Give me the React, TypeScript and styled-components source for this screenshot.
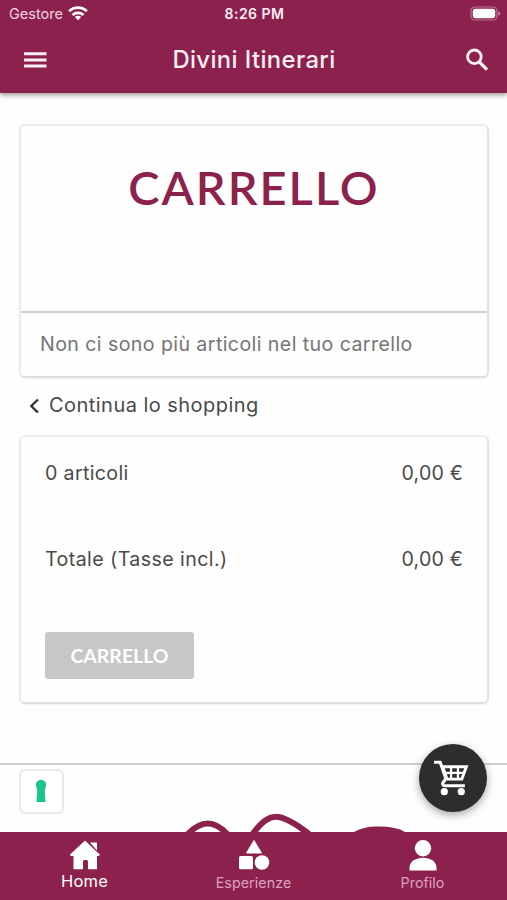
import React from 'react';
import styled, { createGlobalStyle } from 'styled-components';

const wine = '#8c214d';

const GlobalStyle = createGlobalStyle`
  * { box-sizing: border-box; }
  body { margin: 0; background: #fefefe; }
`;

const Screen = styled.div`
  position: relative;
  display: flex;
  flex-direction: column;
  width: 507px;
  height: 900px;
  overflow: hidden;
  background: #fefefe;
  font-family: Inter, sans-serif;
  color: #4a4a4a;
`;

const Header = styled.header`
  flex: none;
  height: 93px;
  background: ${wine};
  color: #fdeef5;
  box-shadow: 0 2px 5px rgba(0, 0, 0, 0.4);
`;

const StatusBar = styled.div`
  display: grid;
  grid-template-columns: 1fr auto 1fr;
  align-items: center;
  height: 27px;
  padding: 0 6px 0 9px;
`;

const Carrier = styled.div`
  display: flex;
  align-items: center;
  gap: 5px;
  font-size: 14.5px;
  letter-spacing: 0.1px;
  color: #f3d3e1;
`;

const Clock = styled.div`
  margin-right: 1px;
  font-size: 14px;
  font-weight: 600;
  letter-spacing: 0.5px;
`;

const BatterySlot = styled.div`
  display: flex;
  justify-content: flex-end;
`;

const Toolbar = styled.div`
  display: grid;
  grid-template-columns: 48px 1fr 48px;
  align-items: center;
  height: 65px;
  padding: 0 17px 0 22px;
`;

const IconButton = styled.button<{ $end?: boolean }>`
  display: flex;
  justify-content: ${(p) => (p.$end ? 'flex-end' : 'flex-start')};
  padding: 0;
  border: 0;
  background: none;
`;

const Title = styled.h1`
  margin: 0 4px 0 0;
  text-align: center;
  font: 500 23.8px/32px Inter, sans-serif;
  letter-spacing: 0.4px;
`;

const Main = styled.main`
  flex: 1;
  min-height: 0;
  display: flex;
  flex-direction: column;
  padding-top: 31px;
`;

const Card = styled.section<{ $height: number }>`
  flex: none;
  height: ${(p) => p.$height}px;
  margin: 0 18px 0 19px;
  border: 2px solid #ebebeb;
  border-right-color: #e2e2e2;
  border-bottom-color: #dedede;
  border-radius: 6px;
  background: #fefefe;
  box-shadow: 0 1px 2px rgba(0, 0, 0, 0.06);
`;

const CardHeading = styled.h2`
  height: 187px;
  margin: 0;
  padding: 28px 0 0 0;
  border-bottom: 2px solid #cfcfcf;
  text-align: center;
  font: 600 47px/66px Lato, sans-serif;
  letter-spacing: 2px;
  color: ${wine};
`;

const EmptyMessage = styled.p`
  margin: 0;
  padding-left: 19px;
  font-size: 19.6px;
  line-height: 62px;
  letter-spacing: 0.41px;
  white-space: nowrap;
  color: #757575;
`;

const BackLink = styled.a`
  flex: none;
  display: flex;
  align-items: center;
  gap: 9px;
  height: 57px;
  padding: 0 0 3px 29px;
  font-size: 20px;
`;

const SummaryRow = styled.div`
  display: flex;
  justify-content: space-between;
  height: 85.5px;
  padding: 0 24px;
  font-size: 19.6px;
  line-height: 72px;
`;

const Label = styled.span<{ $spacing?: number }>`
  letter-spacing: ${(p) => p.$spacing ?? 0}px;
`;

const CartButton = styled.button`
  display: block;
  width: 149px;
  height: 47px;
  margin: 24px 0 0 24px;
  padding: 0;
  border: 0;
  border-radius: 3px;
  background: #c7c7c6;
  color: #fff;
  font: 700 19.5px/46px Lato, sans-serif;
`;

const Footer = styled.footer`
  flex: none;
  display: flex;
  align-items: flex-end;
  height: 69px;
  margin-top: 59px;
  border-top: 2px solid #cecece;
`;

const FooterArt = styled.svg`
  display: block;
  margin-left: 182px;
`;

const ConsentBadge = styled.button`
  position: absolute;
  left: 19px;
  top: 769px;
  display: grid;
  place-items: center;
  width: 45px;
  height: 45px;
  padding: 0 1px 2px 0;
  border: 2px solid #e9e9e9;
  border-radius: 6px;
  background: #fff;
`;

const CartFab = styled.button`
  position: absolute;
  left: 419px;
  top: 744px;
  display: grid;
  place-items: center;
  width: 68px;
  height: 68px;
  padding: 0 3px 2px 0;
  border: 0;
  border-radius: 50%;
  background: #2d2d2d;
  box-shadow: 0 3px 8px rgba(0, 0, 0, 0.35);
`;

const TabBar = styled.nav`
  flex: none;
  display: grid;
  grid-template-columns: repeat(3, 1fr);
  height: 68px;
  padding-top: 7px;
  background: ${wine};
`;

const Tab = styled.a<{ $active?: boolean }>`
  display: flex;
  flex-direction: column;
  align-items: center;
  font: ${(p) => (p.$active ? '400 16.5px/20px' : '400 14.3px/23px')} Inter, sans-serif;
  letter-spacing: ${(p) => (p.$active ? 0.2 : 0.05)}px;
  color: ${(p) => (p.$active ? '#fff' : '#dba0bd')};
`;

export default function App() {
  return (
    <>
      <GlobalStyle />
      <Screen>
        <Header>
          <StatusBar>
            <Carrier>
              <Label>Gestore</Label>
              <svg width="20" height="15" viewBox="0 0 20 15" fill="none" stroke="#fff" strokeWidth="2.7">
                <path d="M1.2 5.2C6 0.4 14 0.4 18.8 5.2" />
                <path d="M4.5 8.9C7.5 6.1 12.5 6.1 15.5 8.9" />
                <path d="M10 14.2L6.8 11C8.6 9.4 11.4 9.4 13.2 11Z" fill="#fff" stroke="none" />
              </svg>
            </Carrier>
            <Clock>8:26 PM</Clock>
            <BatterySlot>
              <svg width="31" height="15" viewBox="0 0 31 15">
                <rect x="1" y="1" width="26" height="13" rx="4" fill="none" stroke="#bd7795" strokeWidth="1.2" />
                <rect x="2.8" y="2.8" width="22.4" height="9.4" rx="2.4" fill="#fff" />
                <path d="M28.5 5Q32 7.5 28.5 10Z" fill="#c486a1" />
              </svg>
            </BatterySlot>
          </StatusBar>
          <Toolbar>
            <IconButton aria-label="Menu">
              <svg width="26" height="18" viewBox="0 0 26 18" fill="#fdeef5">
                <path d="M2 1.3h22.5v2.9H2zM2 7.5h22.5v2.9H2zM2 13.6h22.5v2.9H2z" />
              </svg>
            </IconButton>
            <Title>Divini Itinerari</Title>
            <IconButton $end aria-label="Cerca">
              <svg width="26" height="26" viewBox="0 0 26 26" fill="none" stroke="#fdeef5" strokeWidth="2.8">
                <circle cx="10.4" cy="9.8" r="6.8" />
                <path d="M15 14.6l8 8" strokeWidth="3.4" />
              </svg>
            </IconButton>
          </Toolbar>
        </Header>

        <Main>
          <Card $height={254}>
            <CardHeading>CARRELLO</CardHeading>
            <EmptyMessage>Non ci sono più articoli nel tuo carrello</EmptyMessage>
          </Card>
          <BackLink>
            <svg width="11" height="16" viewBox="0 0 11 16" fill="none" stroke="#333" strokeWidth="2.4">
              <path d="M9 2.500L2.300 9L9 15.500" />
            </svg>
            <Label $spacing={0.46}>Continua lo shopping</Label>
          </BackLink>
          <Card $height={269}>
            <SummaryRow>
              <Label $spacing={0.35}>0 articoli</Label>
              <Label $spacing={0.2}>0,00 €</Label>
            </SummaryRow>
            <SummaryRow>
              <Label $spacing={0.43}>Totale (Tasse incl.)</Label>
              <Label $spacing={0.2}>0,00 €</Label>
            </SummaryRow>
            <CartButton>CARRELLO</CartButton>
          </Card>
          <Footer>
            <FooterArt width="240" height="20" viewBox="0 0 240 20">
              <path d="M5 23Q26 0 46 23" fill="none" stroke={wine} strokeWidth="6" />
              <path d="M70 23C87 -1 97 -1 127 22" fill="none" stroke={wine} strokeWidth="6" />
              <path d="M172 20Q182 14.500 194 14.500Q214 14 223 20Z" fill={wine} />
            </FooterArt>
          </Footer>
        </Main>

        <TabBar>
          <Tab $active>
            <svg width="34" height="32" viewBox="0 0 34 32" fill="#fff">
              <path d="M17 1.6L32 15.7L30.8 17H29v13.2H20V22.5Q20 21 18.7 21H16.3Q15 21 15 22.5V30.2H5.500V17H3L1.800 15.700Z" />
              <path d="M22 3.500h7v8z" />
            </svg>
            Home
          </Tab>
          <Tab>
            <svg width="34" height="32" viewBox="0 0 34 32" fill="#fff">
              <path d="M17 1.500L24.500 14H9.500Z" stroke="#fff" strokeLinejoin="round" />
              <rect x="2" y="17" width="14" height="13.200" rx="1.500" />
              <circle cx="25" cy="23.500" r="7.300" />
            </svg>
            Esperienze
          </Tab>
          <Tab>
            <svg width="34" height="32" viewBox="0 0 34 32" fill="#fff">
              <circle cx="17" cy="9.200" r="8.200" />
              <path d="M3.500 31.500V29C3.500 22 10 18.700 17 18.700S30.500 22 30.500 29V31.500Z" />
            </svg>
            Profilo
          </Tab>
        </TabBar>

        <ConsentBadge aria-label="Privacy">
          <svg width="12" height="24" viewBox="0 0 12 24" fill="#1dc48a">
            <circle cx="6" cy="6" r="5.200" />
            <path d="M1.800 8h8.400l-.4 4L10.500 23h-9L2.200 12z" />
          </svg>
        </ConsentBadge>
        <CartFab aria-label="Carrello">
          <svg width="37" height="37" viewBox="0 0 36 36">
            <path d="M1 3.200H7L12.500 19L9.500 23.500Q9 26 12 26H31" fill="none" stroke="#fff" strokeWidth="3" />
            <path d="M8 6H34.500L29 21H12.500Z" fill="#fff" />
            <path d="M11.500 9h5v3.400h-3.800zM18.700 9h4.500v3.400h-4.500zM25.400 9h5l-1.300 3.400h-3.700zM13.500 14.600h3v3.600h-1.800zM18.700 14.600h4.500v3.600h-4.500zM25.400 14.600h3l-1.400 3.600h-1.600z" fill="#2d2d2d" />
            <circle cx="11" cy="31.800" r="3.500" fill="#fff" />
            <circle cx="27.500" cy="31.800" r="3.500" fill="#fff" />
          </svg>
        </CartFab>
      </Screen>
    </>
  );
}
